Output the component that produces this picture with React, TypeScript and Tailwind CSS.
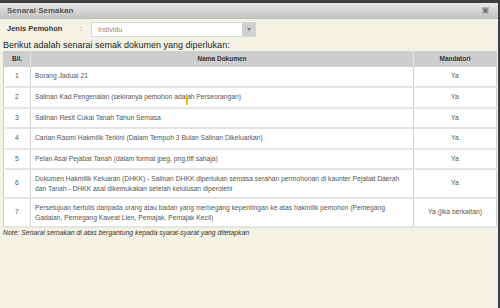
import React from 'react';

type Doc = { no: number; name: React.ReactNode; mandatori: string; tall?: boolean };

const docs: Doc[] = [
  { no: 1, name: 'Borang Jadual 21', mandatori: 'Ya' },
  { no: 2, name: 'Salinan Kad Pengenalan (sekiranya pemohon adalah Perseorangan)', mandatori: 'Ya' },
  { no: 3, name: 'Salinan Resit Cukai Tanah Tahun Semasa', mandatori: 'Ya' },
  { no: 4, name: 'Carian Rasmi Hakmilik Terkini (Dalam Tempoh 3 Bulan Salinan Dikeluarkan)', mandatori: 'Ya' },
  { no: 5, name: 'Pelan Asal Pejabat Tanah (dalam format jpeg, png,tiff sahaja)', mandatori: 'Ya' },
  {
    no: 6,
    name: (
      <>
        Dokumen Hakmilik Keluaran (DHKK) - Salinan DHKK diperlukan semasa serahan permohonan di kaunter Pejabat Daerah
        <br />
        dan Tanah - DHKK asal dikemukakan setelah kelulusan diperolehi
      </>
    ),
    mandatori: 'Ya',
    tall: true,
  },
  {
    no: 7,
    name: (
      <>
        Persetujuan bertulis daripada orang atau badan yang memegang kepentingan ke atas hakmilik pemohon (Pemegang
        <br />
        Gadaian, Pemegang Kaveat Lien, Pemajak, Pemajak Kecil)
      </>
    ),
    mandatori: 'Ya (jika berkaitan)',
    tall: true,
  },
];

export default function App() {
  return (
    <div className="relative w-[500px] h-[308px] overflow-hidden flex flex-col bg-[#f4f2e5] border-t-[3px] border-r-2 border-[#3f3f3f] font-['Liberation_Sans',Arial,sans-serif]">
      {/* Title bar */}
      <div className="h-[16px] shrink-0 flex items-center justify-between pl-[7px] pr-[9px] bg-gradient-to-b from-[#e6e6e6] to-[#c4c4c4] border-b border-[#bdbdbd]">
        <span className="text-[8px] font-bold text-[#555]">Senarai Semakan</span>
        <svg width="7" height="7" viewBox="0 0 7 7">
          <rect x="0" y="0" width="7" height="7" fill="#b5b5b5" />
          <path d="M1.5 1.5 L5.5 5.5 M5.5 1.5 L1.5 5.5" stroke="#666" strokeWidth="1.4" />
        </svg>
      </div>

      <div className="flex flex-col px-[3px]">
        {/* Jenis Pemohon */}
        <div className="flex items-center h-[16px] mt-[2px]">
          <span className="w-[77px] pl-[4px] text-[7.5px] font-bold text-[#333]">Jenis Pemohon</span>
          <span className="w-[11px] text-[7.5px] text-[#555]">:</span>
          <div className="w-[165px] h-[15px] flex bg-white border border-[#d8d8d8]">
            <span className="flex-1 pl-[6px] text-[7px] text-[#888] leading-[13px]">Individu</span>
            <span className="w-[13px] bg-[#d0d0d0] flex items-center justify-center">
              <svg width="4" height="3" viewBox="0 0 4 3">
                <path d="M0 0 H4 L2 3 Z" fill="#777" />
              </svg>
            </span>
          </div>
        </div>

        <div className="text-[9px] leading-[12px] text-[#222] mt-[2px]">
          Berikut adalah senarai semak dokumen yang diperlukan:
        </div>

        <table className="w-[494px] border-collapse border border-[#cfcfcf] table-fixed">
          <colgroup>
            <col className="w-[27px]" />
            <col />
            <col className="w-[83px]" />
          </colgroup>
          <thead>
            <tr className="h-[15px] bg-[#cdcdcd] text-[6.5px] font-bold text-[#333]">
              <th className="border-r border-[#e2e2e2] font-bold">Bil.</th>
              <th className="border-r border-[#e2e2e2] font-bold">Nama Dokumen</th>
              <th className="font-bold">Mandatori</th>
            </tr>
          </thead>
          <tbody className="bg-white text-[6.75px] text-[#555]">
            {docs.map((d) => (
              <tr key={d.no} className={`${d.tall ? 'h-[29px]' : 'h-[20.5px]'} border-b-2 border-[#e4e4e4]`}>
                <td className="text-center border-r border-[#d0d0d0]">{d.no}</td>
                <td className="pl-[4px] leading-[10px] border-r border-[#d0d0d0]">{d.name}</td>
                <td className="text-center">{d.mandatori}</td>
              </tr>
            ))}
          </tbody>
        </table>

        <div className="text-[6.85px] leading-[9px] italic text-[#333]">
          Note: Senarai semakan di atas bergantung kepada syarat-syarat yang ditetapkan
        </div>
      </div>

      {/* mouse cursor */}
      <div className="absolute left-[186px] top-[93px] w-[2px] h-[9px] bg-[#f2c200]" />
    </div>
  );
}
